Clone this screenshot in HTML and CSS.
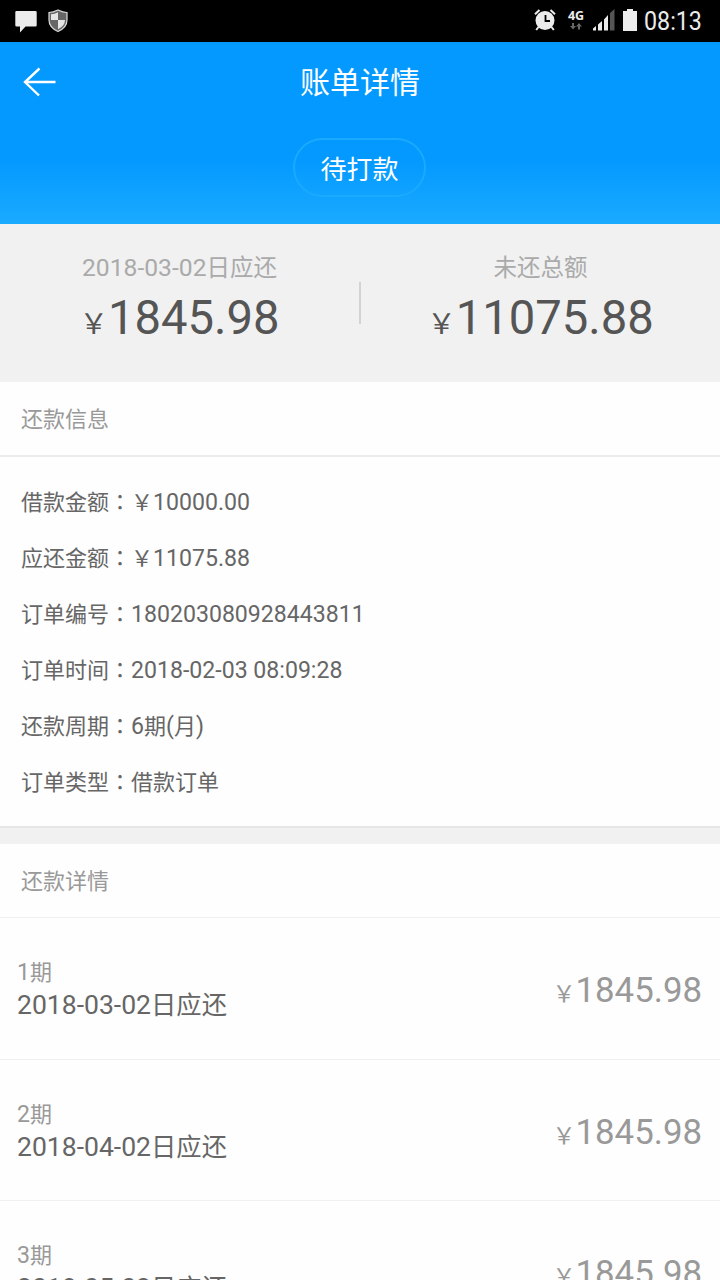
FILE: index.html
```html
<!DOCTYPE html>
<html lang="zh-CN">
<head>
  <meta charset="UTF-8">
  <meta name="viewport" content="width=device-width, initial-scale=1.0">
  <title>账单详情</title>
  <link rel="stylesheet" href="styles.css">
</head>
<body>

  <div class="status-bar">
    <svg class="icon-chat" width="22" height="22" viewBox="0 0 22 22"><path d="M1.500 0h19q1.200 0 1.200 1.200v13q0 1.200-1.200 1.200H10.500L5 21.500V15.400H1.500Q.3 15.400.3 14.200V1.200Q.3 0 1.500 0z" fill="#ececec"/></svg>
    <svg class="icon-shield" width="20" height="24" viewBox="0 0 20 24">
      <path d="M10 1Q5 3.500 1 3.500V11q0 7.500 9 11.500 9-4 9-11.500V3.500Q15 3.500 10 1z" fill="#666" stroke="#ddd" stroke-width="1.200"/>
      <path d="M10 3.200Q6.500 5 3 5.200V11h7zM10 11h7q0 6-7 9.300z" fill="#e6e6e6"/>
    </svg>
    <div class="status-right">
      <svg class="icon-alarm" width="22" height="22" viewBox="0 0 22 22">
        <circle cx="11" cy="11.500" r="9.500" fill="#ececec"/>
        <path d="M1 5.200L5.500 1M21 5.200L16.500 1M4.500 18l-2.300 3M17.500 18l2.300 3" stroke="#ececec" stroke-width="2"/>
        <path d="M11.500 6v6H16" fill="none" stroke="#000" stroke-width="1.800"/>
      </svg>
      <div class="network">
        <span>4G</span>
        <svg width="12" height="7" viewBox="0 0 12 7"><path d="M2 0h2v3h2L3 6.500 0 3h2zM8 6.500h2v-3h2L9 0 6 3.500h2z" fill="#666"/></svg>
      </div>
      <svg class="icon-signal" width="22" height="22" viewBox="0 0 22 22">
        <path d="M0 21.500v-2l3-2.500v4.500zM5 21.500v-6L9 12v9.500zM11 21.500V10.500L15 6v15.500z" fill="#ececec"/>
        <path d="M17 21.500V4L21.500 0v21.500z" fill="#555"/>
      </svg>
      <svg class="icon-battery" width="14" height="22" viewBox="0 0 14 22"><path d="M4 0h6v2h4v20H0V2h4z" fill="#ececec"/></svg>
      <span class="clock">08:13</span>
    </div>
  </div>

  <header class="header">
    <div class="nav">
      <svg class="back" width="33" height="30" viewBox="0 0 33 30"><path d="M16.500 1.500L2 15l14 13.500M2 15h30.500" fill="none" stroke="#fff" stroke-width="2.400"/></svg>
      <h1>账单详情</h1>
    </div>
    <div class="state">待打款</div>
  </header>

  <section class="summary">
    <div class="summary-item">
      <p class="label"><span class="num">2018-03-02</span>日应还</p>
      <p class="amount"><span class="yen">￥</span>1845.98</p>
    </div>
    <div class="divider"></div>
    <div class="summary-item">
      <p class="label">未还总额</p>
      <p class="amount"><span class="yen">￥</span>11075.88</p>
    </div>
  </section>

  <section class="info">
    <h2 class="section-title">还款信息</h2>
    <ul class="info-list">
      <li>借款金额<span class="colon" lang="zh-TW">：</span>￥<span class="num">10000.00</span></li>
      <li>应还金额<span class="colon" lang="zh-TW">：</span>￥<span class="num">11075.88</span></li>
      <li>订单编号<span class="colon" lang="zh-TW">：</span><span class="num">180203080928443811</span></li>
      <li>订单时间<span class="colon" lang="zh-TW">：</span><span class="num">2018-02-03 08:09:28</span></li>
      <li>还款周期<span class="colon" lang="zh-TW">：</span><span class="num">6</span>期<span class="num">(</span>月<span class="num">)</span></li>
      <li>订单类型<span class="colon" lang="zh-TW">：</span>借款订单</li>
    </ul>
  </section>

  <section class="detail">
    <h2 class="section-title">还款详情</h2>
    <div class="period">
      <div>
        <p class="period-no"><span class="num">1</span>期</p>
        <p class="period-date"><span class="num">2018-03-02</span>日应还</p>
      </div>
      <p class="period-amount"><span class="yen">￥</span>1845.98</p>
    </div>
    <div class="period">
      <div>
        <p class="period-no"><span class="num">2</span>期</p>
        <p class="period-date"><span class="num">2018-04-02</span>日应还</p>
      </div>
      <p class="period-amount"><span class="yen">￥</span>1845.98</p>
    </div>
    <div class="period">
      <div>
        <p class="period-no"><span class="num">3</span>期</p>
        <p class="period-date"><span class="num">2018-05-02</span>日应还</p>
      </div>
      <p class="period-amount"><span class="yen">￥</span>1845.98</p>
    </div>
  </section>

</body>
</html>
```

FILE: styles.css
```css
* {
  box-sizing: border-box;
  margin: 0;
  padding: 0;
}
body {
  width: 720px;
  height: 1280px;
  overflow: hidden;
  background: #fefefe;
  color: #666;
  font-family: Roboto, "Noto Sans CJK SC", sans-serif;
  font-weight: 400;
}
ul {
  list-style: none;
}
/* latin digits run slightly larger than the chinese text */
.num {
  font-size: 1.05em;
}
/* colon sits in the middle of its box */
.colon {
  font-family: "Noto Sans CJK TC", sans-serif;
  line-height: 1;
}
.status-bar {
  display: flex;
  height: 42px;
  padding: 0 19px 0 15px;
  background: #000;
  color: #ececec;
}
.icon-chat {
  margin-top: 11px;
}
.icon-shield {
  margin: 9px 0 0 11px;
}
.status-right {
  display: flex;
  margin-left: auto;
  padding-top: 9px;
}
.icon-alarm {
  margin-right: 11px;
}
.network {
  display: flex;
  flex-direction: column;
  align-items: center;
  width: 18px;
  margin-right: 8px;
  font: bold 12.500px/14px "Open Sans", sans-serif;
}
.icon-signal {
  margin-right: 8px;
}
.clock {
  width: 57px;
  margin-left: 7px;
  font-size: 25px;
  line-height: 25px;
  white-space: nowrap;
  transform: scaleX(0.93);
  transform-origin: left;
}
.header {
  height: 182px;
  background: linear-gradient(#0499ff 0, #0499ff 65%, #1aabff 100%);
  color: #fff;
}
.nav {
  display: grid;
  grid-template-columns: 33px 1fr 33px;
  align-items: center;
  height: 80px;
  padding: 0 23px;
}
.nav h1 {
  padding-bottom: 4px;
  font-size: 30px;
  font-weight: 400;
  text-align: center;
}
.state {
  width: 133px;
  height: 59px;
  margin: 16px 0 0 293px;
  border: 2px solid #1aaaff;
  border-radius: 30px;
  font-size: 26px;
  line-height: 60px;
  text-align: center;
}
.summary {
  display: flex;
  height: 158px;
  background: #f1f1f1;
}
.summary-item {
  flex: 1;
  padding-top: 28px;
  text-align: center;
}
.label {
  color: #aaa;
  font-size: 23.500px;
  line-height: 32px;
}
.amount {
  margin-top: 4px;
  color: #555;
  font-size: 47.200px;
  line-height: 60px;
}
.amount .yen {
  font-size: 28.500px;
}
.divider {
  width: 2px;
  height: 42px;
  margin-top: 58px;
  background: #d3d3d3;
}
.section-title {
  height: 75px;
  padding-left: 21px;
  border-bottom: 2px solid #ececec;
  color: #999;
  font-size: 22px;
  font-weight: 400;
  line-height: 76px;
}
.info-list {
  height: 369px;
  padding: 18px 21px 0;
  font-size: 22px;
  line-height: 56px;
}
.info-list li {
  height: 56px;
}
.info {
  border-bottom: 2px solid #e6e6e6;
}
.detail {
  border-top: 16px solid #f1f1f1;
}
.detail .section-title {
  height: 74px;
  border-bottom: 1px solid #f0f0f0;
}
.period {
  display: flex;
  justify-content: space-between;
  height: 141.500px;
  padding: 39px 18px 0 17px;
  border-bottom: 1px solid #f0f0f0;
}
.period-no {
  color: #999;
  font-size: 22px;
  line-height: 32px;
}
.period-date {
  font-size: 25.300px;
  line-height: 32px;
}
.period-amount {
  color: #999;
  font-size: 34.800px;
  line-height: 66px;
}
.period-amount .yen {
  font-size: 23px;
}
```
